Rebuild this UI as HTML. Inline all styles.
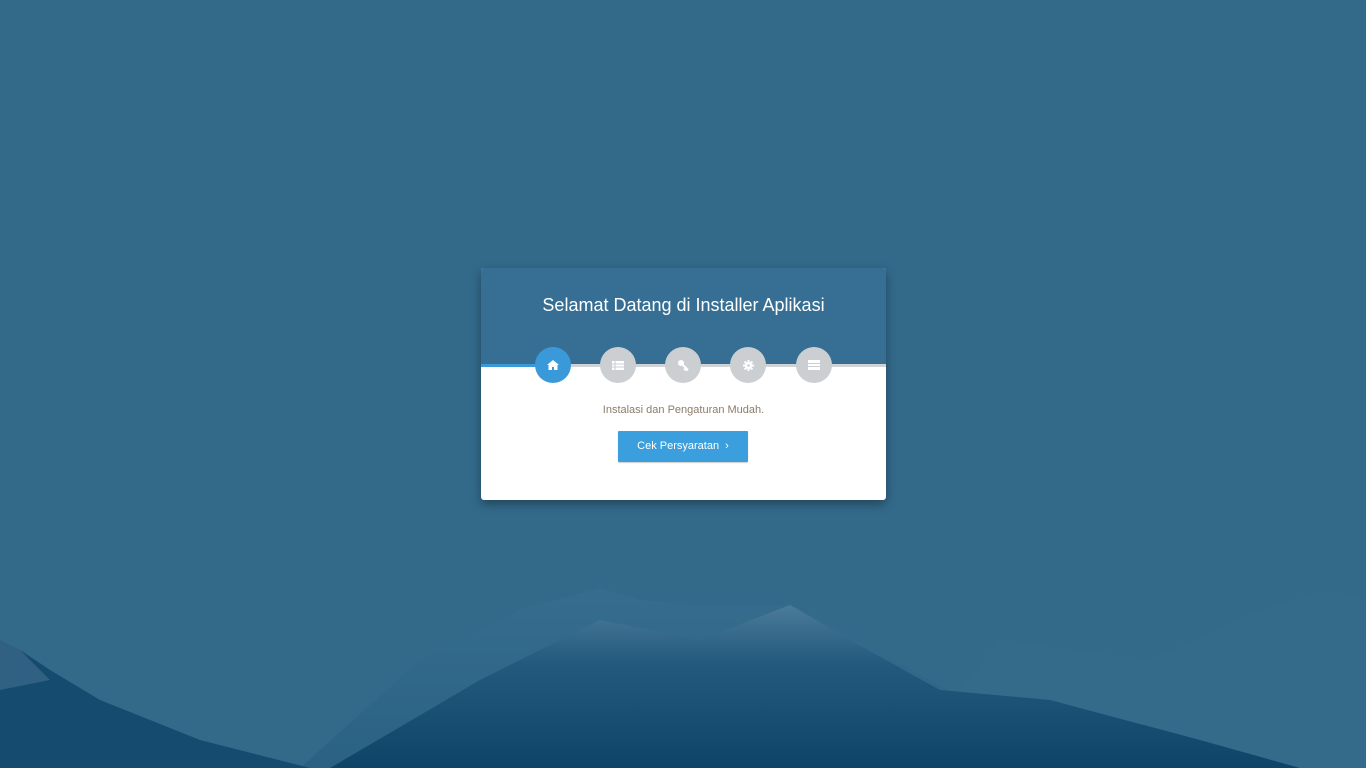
<!DOCTYPE html>
<html><head><meta charset="utf-8"><style>
html,body{margin:0;padding:0;width:1366px;height:768px;overflow:hidden;background:#336a8a;font-family:"Liberation Sans",sans-serif}
svg.bg{position:absolute;left:0;top:0}
.card{position:absolute;left:481px;top:268px;width:405px;height:232px;background:#fff;border-radius:3px;box-shadow:0 4px 10px rgba(0,0,0,.35);overflow:hidden}
.head{height:97px;background:#366f93;color:#fff;text-align:center;font-size:18px;line-height:18px;padding-top:28px;box-sizing:border-box}
.line{position:absolute;top:96px;left:0;width:405px;height:3px;background:#cfd3d6}
.line b{position:absolute;left:0;top:0;width:72px;height:3px;background:#3a9ad9}
.c{position:absolute;top:79px;width:36px;height:36px;border-radius:50%;background:#cbcfd2;display:flex;align-items:center;justify-content:center}
.c.a{background:#3a9ad9}
.sub{position:absolute;top:136px;width:100%;text-align:center;font-size:11px;color:#8c7b6a}
.btn{position:absolute;left:137px;top:163px;width:130px;height:31px;background:#3a9fdc;color:#fff;font-size:11px;line-height:30px;text-align:center;border-radius:1px;box-shadow:0 1px 1px rgba(0,0,0,.2)}
</style></head><body>
<svg class="bg" width="1366" height="768">
<defs>
<linearGradient id="g1" x1="0" y1="0" x2="0" y2="1"><stop offset="0" stop-color="#3a7192"/><stop offset="1" stop-color="#225a7e"/></linearGradient>
<linearGradient id="g2" x1="0" y1="0" x2="0" y2="1"><stop offset="0" stop-color="#4b7b99"/><stop offset=".35" stop-color="#235a7e"/><stop offset="1" stop-color="#0e4467"/></linearGradient>
</defs>
<polygon points="900,768 1000,640 1150,660 1260,610 1330,590 1366,600 1366,768" fill="#356b8b" opacity=".6"/>
<polygon points="300,768 420,660 520,610 600,588 640,600 690,605 790,605 860,640 1000,720 1050,768" fill="url(#g1)" opacity=".5"/>
<polygon points="330,768 480,680 600,620 700,640 790,605 850,640 940,690 1050,700 1200,740 1300,768" fill="url(#g2)"/>
<polygon points="0,640 20,650 50,670 100,700 200,740 310,768 0,768" fill="#154b6e"/>
<polygon points="0,640 20,650 50,680 0,690" fill="#4b7896" opacity=".5"/>
</svg>
<div class="card">
<div class="head">Selamat Datang di Installer Aplikasi</div>
<div class="line"><b></b></div>
<div class="c a" style="left:54px"><svg width="12" height="10" viewBox="0 0 12 10"><path d="M6 0L0 5h1.5v5h3.5V7h2v3h3.5V5H12z" fill="#fff"/></svg></div>
<div class="c" style="left:119px"><svg width="12" height="9"><rect width="12" height="9" fill="#fff"/><path d="M0 3h12M0 6h12M3 0v9" stroke="#cbcfd2" stroke-width="1"/></svg></div>
<div class="c" style="left:184px"><svg width="12" height="12"><circle cx="4" cy="4" r="3" fill="#fff"/><path d="M5 5l6 6M9 9l-2 2M10.5 10.5l-1.5 1.5" stroke="#fff" stroke-width="2"/></svg></div>
<div class="c" style="left:249px"><svg width="11" height="11" viewBox="0 0 11 11"><circle cx="5.5" cy="5.5" r="3.5" fill="#fff"/><path d="M5.5 0v11M0 5.5h11M1.6 1.6l7.8 7.8M9.4 1.6l-7.8 7.8" stroke="#fff" stroke-width="2"/><circle cx="5.5" cy="5.5" r="1.3" fill="#cbcfd2"/></svg></div>
<div class="c" style="left:315px"><svg width="12" height="10"><rect width="12" height="10" fill="#fff"/><path d="M0 3.5h12M0 6.5h12" stroke="#cbcfd2"/></svg></div>
<div class="sub">Instalasi dan Pengaturan Mudah.</div>
<div class="btn">Cek Persyaratan &nbsp;›</div>
</div>
</body></html>
